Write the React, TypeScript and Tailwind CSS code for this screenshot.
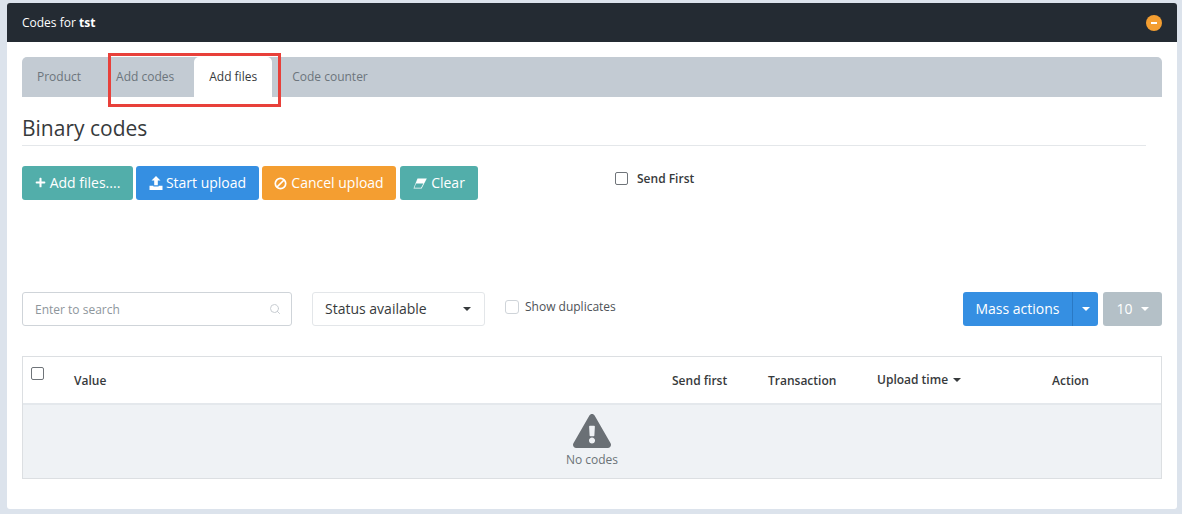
import React from "react";
import { FaPlus, FaExclamationTriangle } from "react-icons/fa";
import { Search } from "lucide-react";

const Caret = ({ className = "" }: { className?: string }) => (
  <span className={"inline-block w-0 h-0 border-x-[4px] border-x-transparent border-t-[4px] " + className} />
);

const UploadIcon = () => (
  <svg width="14" height="14" viewBox="0 0 14 14" fill="white" className="mt-[2px]" aria-hidden="true">
    <path d="M7 0 L11.5 4.6 H8.8 V9.2 H5.2 V4.6 H2.5 Z" />
    <path d="M0.5 9.8 H4.4 V10.6 H9.6 V9.8 H13.5 V14 H0.5 Z" />
  </svg>
);

const BanIcon = () => (
  <svg width="13" height="13" viewBox="0 0 13 13" fill="none" stroke="white" strokeWidth="1.7" className="mt-[2px]" aria-hidden="true">
    <circle cx="6.5" cy="6.5" r="5.2" />
    <path d="M3 10 L10 3" />
  </svg>
);

const EraserIcon = () => (
  <svg width="14" height="11" viewBox="0 0 14 11" className="mt-[2px]" aria-hidden="true">
    <path d="M4.5 0.5 H13.8 L8.6 10.5 H0.5 Z" fill="white" />
    <path d="M3 5.6 H10.4 L8.1 9.7 H1.4 Z" fill="#52aeaa" />
  </svg>
);

const tabs = ["Product", "Add codes", "Add files", "Code counter"];

export default function App() {
  return (
    <div className="w-[1182px] h-[514px] overflow-hidden bg-[#dce3ec] pt-[3px] px-[7px] font-['Open_Sans',sans-serif] text-[#373a3c]">
      <div className="relative h-[506px] w-[1170px] bg-white rounded-[3px]">
        <div className="h-[39px] bg-[#242b33] flex items-center justify-between pl-[15px] pr-[15px] rounded-t-[3px]">
          <div className="text-[12px] text-white">
            Codes for <b className="font-bold">tst</b>
          </div>
          <div className="w-4 h-4 rounded-full bg-[#f49e31] flex items-center justify-center">
            <span className="w-[6px] h-[2px] bg-white" />
          </div>
        </div>

        <div className="px-[15px] pt-[15px]">
          <div className="flex h-10 bg-[#c3cbd3] rounded-t-[5px] gap-[5px]">
            {tabs.map((t) => (
              <div
                key={t}
                className={
                  "px-[15px] flex items-center text-[12px] rounded-t-[5px] " +
                  (t === "Add files" ? "bg-white text-[#373a3c]" : "text-[#6c757c]")
                }
              >
                {t}
              </div>
            ))}
          </div>

          <div className="mr-4 mt-[16px] h-[33px] border-b border-[#e4e7ea] text-[21px] leading-[30px] text-[#373a3c]">
            Binary codes
          </div>

          <div className="flex mt-5 items-start">
            <div className="flex gap-[3px] text-white text-[14px]">
              <button className="h-[34px] w-[111px] pb-[2px] rounded-[3px] bg-[#52aeaa] flex items-center justify-center gap-1">
                <FaPlus className="text-[11px]" /> Add files....
              </button>
              <button className="h-[34px] w-[123px] pb-[2px] rounded-[3px] bg-[#358fe2] flex items-center justify-center gap-[3px]">
                <UploadIcon /> Start upload
              </button>
              <button className="h-[34px] w-[134px] pb-[2px] rounded-[3px] bg-[#f49e31] flex items-center justify-center gap-1">
                <BanIcon /> Cancel upload
              </button>
              <button className="ml-px h-[34px] w-[78px] pb-[2px] rounded-[3px] bg-[#52aeaa] flex items-center justify-center gap-1">
                <EraserIcon /> Clear
              </button>
            </div>
            <div className="ml-[137px] mt-1 flex items-center h-[16px] text-[12px] font-semibold">
              <span className="w-[13px] h-[13px] border border-[#6f7479] rounded-[2px]" />
              <span className="ml-[9px] mt-[2px]">Send First</span>
            </div>
          </div>

          <div className="flex mt-[92px] items-start">
            <div className="w-[270px] h-[34px] border border-[#cfd4d9] rounded-[3px] flex items-center justify-between pl-3 pr-[10px] text-[12px] text-[#8e969c]">
              <span className="mt-px">Enter to search</span>
              <Search size={12} strokeWidth={2} className="text-[#c8cdd2]" />
            </div>
            <div className="ml-5 w-[173px] h-[34px] border border-[#e3e6e9] rounded-[3px] flex items-center justify-between pl-3 pr-[13px] text-[14px] text-[#373a3c]">
              <span className="mb-[2px]">Status available</span>
              <Caret className="border-t-[#373a3c]" />
            </div>
            <div className="ml-5 flex items-center h-[30px] text-[12px] text-[#4d5257]">
              <span className="w-[14px] h-[14px] border border-[#cfd4d9] rounded-[3px]" />
              <span className="ml-[6px] mb-px">Show duplicates</span>
            </div>
            <div className="ml-auto flex text-white text-[14px]">
              <button className="w-[110px] h-[34px] pb-[2px] bg-[#358fe2] rounded-l-[3px] border-r border-[#2a79c4]">Mass actions</button>
              <button className="w-[25px] h-[34px] bg-[#358fe2] rounded-r-[3px] flex items-center justify-center">
                <Caret className="border-t-white" />
              </button>
              <button className="ml-[5px] w-[59px] h-[34px] pb-[2px] bg-[#b4c0c7] rounded-[3px] flex items-center justify-center gap-2">
                10 <Caret className="border-t-white mt-[2px]" />
              </button>
            </div>
          </div>

          <div className="mt-[30px] border border-[#dcdfe2]">
            <table className="w-full table-fixed text-[12px] font-semibold">
              <colgroup>
                <col className="w-[36px]" />
                <col className="w-[598px]" />
                <col className="w-[96px]" />
                <col className="w-[109px]" />
                <col className="w-[175px]" />
                <col />
              </colgroup>
              <thead>
                <tr className="h-[47px] border-b-2 border-[#e4e8ec] text-left">
                  <th className="pl-[8px] align-top pt-[10px]">
                    <span className="block w-[13px] h-[13px] border border-[#6f7479] rounded-[2px]" />
                  </th>
                  <th className="pl-[15px] pt-px font-semibold">Value</th>
                  <th className="pl-[15px] pt-px font-semibold">Send first</th>
                  <th className="pl-[15px] pt-px font-semibold">Transaction</th>
                  <th className="pl-[15px] font-semibold">
                    <span className="inline-flex items-center gap-[5px]">
                      Upload time <Caret className="border-t-[#373a3c]" />
                    </span>
                  </th>
                  <th className="pl-[15px] pt-px font-semibold">Action</th>
                </tr>
              </thead>
              <tbody>
                <tr>
                  <td colSpan={6} className="h-[74px] bg-[#eff2f5] align-top pt-[8px]">
                    <div className="flex flex-col items-center text-[#6b7277] font-normal">
                      <FaExclamationTriangle className="text-[38px] text-[#6a7075] mt-[-1px]" />
                      <div className="text-[12px] leading-[16px] mt-[2px]">No codes</div>
                    </div>
                  </td>
                </tr>
              </tbody>
            </table>
          </div>
        </div>

        <div className="absolute left-[101px] top-[50px] w-[173px] h-[54px] border-[3px] border-[#e8403a]" />
      </div>
    </div>
  );
}
